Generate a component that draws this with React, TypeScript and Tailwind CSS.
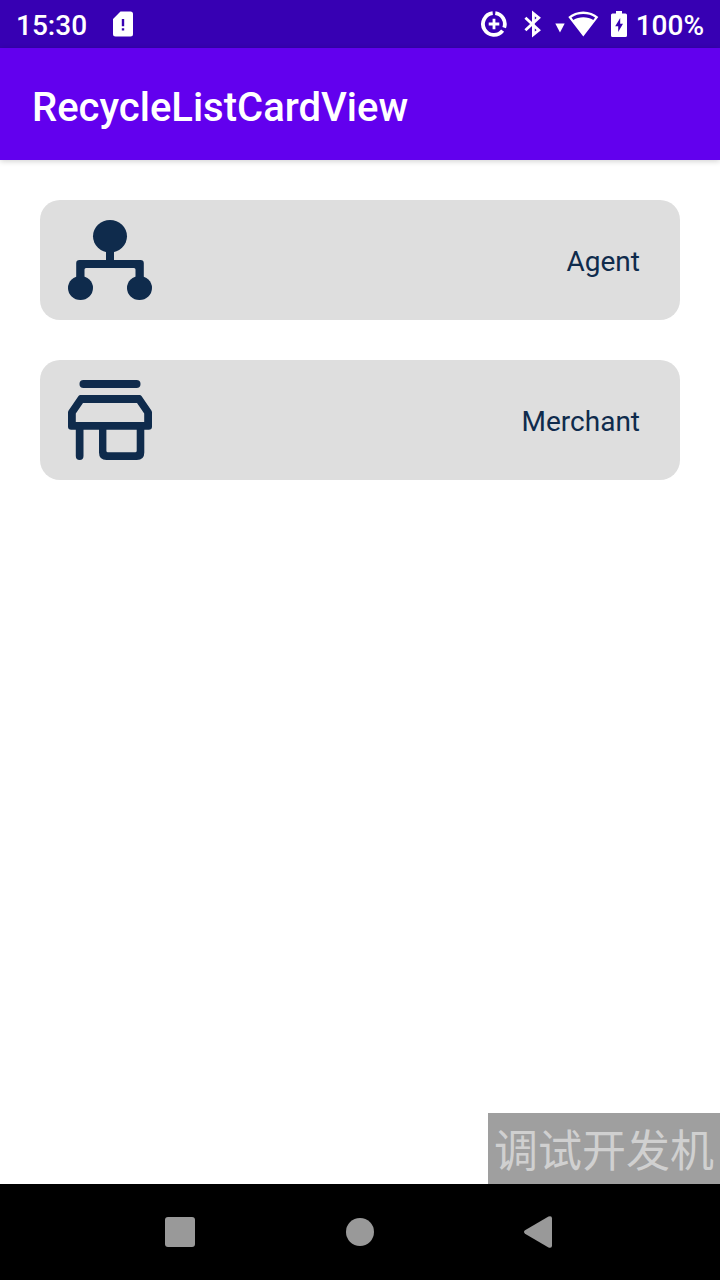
import type { ReactNode } from "react";

function StatusBar() {
  return (
    <header className="flex h-12 items-center justify-between bg-[#3700b3] px-4 text-[28px] leading-8 font-medium text-white">
      <div className="flex items-center gap-6">
        <time className="pt-1">15:30</time>
        <svg viewBox="0 0 24 26" className="h-[26px] w-6" aria-label="SD card issue">
          <path
            fillRule="evenodd"
            fill="currentColor"
            d="M9.5 0.5H19.5A2.5 2.5 0 0 1 22 3V23A2.500 2.500 0 0 1 19.500 25.500H4.500A2.500 2.500 0 0 1 2 23V8ZM10.800 8V15.200H13.200V8ZM10.800 17.200V19.600H13.200V17.200Z"
          />
        </svg>
      </div>
      <div className="flex items-center">
        <svg viewBox="0 0 26 26" className="mr-4 size-[26px]" aria-label="Data saver">
          <path
            fill="none"
            stroke="currentColor"
            strokeWidth="3.800"
            d="M11.700 2.200A10.900 10.900 0 1 0 21.600 19.600M23.200 16.600A10.900 10.900 0 0 0 14.300 2.200"
          />
          <path fill="none" stroke="currentColor" strokeWidth="2.800" d="M13 7.700V18.300M7.700 13H18.300" />
        </svg>
        <svg viewBox="0 0 20 28" className="mr-3 h-7 w-5" aria-label="Bluetooth">
          <path
            fill="none"
            stroke="currentColor"
            strokeWidth="2.800"
            d="M2.400 7.700L15.800 20.200L10.400 24.500V3.500L15.800 7.800L2.400 20.300"
          />
        </svg>
        <svg viewBox="0 0 44 26" className="mr-3 h-[26px] w-11" aria-label="Wi-Fi">
          <path fill="currentColor" d="M0.300 12.500H9.700L5 21.500Z" />
          <path
            fillRule="evenodd"
            fill="currentColor"
            d="M13.300 6C17.200 2.500 22.500 0.400 28.300 0.400S39.400 2.500 43.300 6L28.300 25.600ZM16.500 6.400L18.300 8.900C21.200 7.300 24.600 6.200 28.300 6.200S35.400 7.300 38.300 8.900L40.100 6.400C36.800 4.300 32.700 3.100 28.300 3.100S19.800 4.300 16.500 6.400Z"
          />
        </svg>
        <svg viewBox="0 0 16 28" className="mr-[9px] h-7 w-4" aria-label="Battery charging">
          <path
            fillRule="evenodd"
            fill="currentColor"
            d="M5 1H11V3.500H14.500A1.500 1.500 0 0 1 16 5V25.500A1.500 1.500 0 0 1 14.500 27H1.500A1.500 1.500 0 0 1 0 25.500V5A1.500 1.500 0 0 1 1.500 3.500H5ZM9.200 8L4.200 16.200H7.200V22L12 13.700H9.200Z"
          />
        </svg>
        <span className="pt-1">100%</span>
      </div>
    </header>
  );
}

function AgentIcon() {
  return (
    <svg viewBox="0 0 84 80" className="h-20 w-[84px]" fill="currentColor" aria-hidden="true">
      <ellipse cx="42" cy="16.200" rx="17" ry="16.200" />
      <ellipse cx="12.500" cy="68" rx="12.500" ry="12" />
      <ellipse cx="71.500" cy="68" rx="12.500" ry="12" />
      <path d="M38 30H46V40H72.500Q75.800 40 75.800 43.300V60H67.500V49.500Q67.500 48 66 48H18Q16.500 48 16.500 49.500V60H8.200V43.300Q8.200 40 11.500 40H38Z" />
    </svg>
  );
}

function MerchantIcon() {
  return (
    <svg viewBox="0 0 84 80" className="h-20 w-[84px]" fill="currentColor" aria-hidden="true">
      <rect x="11.500" y="0" width="61" height="8" rx="4" />
      <path
        fillRule="evenodd"
        d="M12.500 15H71.500Q72.800 15 73.500 16L83.400 30.500Q84 31.500 84 32.600V46.500Q84 49.700 80.800 49.700H3.200Q0 49.700 0 46.500V32.600Q0 31.500 0.600 30.500L10.500 16Q11.200 15 12.500 15ZM15 23L7.800 33.500V42H76.200V33.500L69 23Z"
      />
      <path d="M7.800 48H15.500V76A3.850 4 0 0 1 7.800 76Z" />
      <path d="M31 48H38.400V70.800Q38.400 72.300 39.900 72.300H67.200Q68.700 72.300 68.700 70.800V48H76.300V72.500Q76.300 80 68.800 80H38.500Q31 80 31 72.500Z" />
    </svg>
  );
}

function Card({ label, icon }: { label: string; icon: ReactNode }) {
  return (
    <li>
      <button
        type="button"
        className="flex w-full items-center justify-between rounded-[20px] bg-[#dedede] py-5 pr-10 pl-7 text-[#0f2b4c]"
      >
        {icon}
        <span className="pt-1 text-[28px] leading-8">{label}</span>
      </button>
    </li>
  );
}

function NavBar() {
  return (
    <nav className="grid h-24 grid-cols-3 bg-black px-[12.5%] text-[#999999]">
      <button type="button" aria-label="Recent apps" className="flex items-center justify-center">
        <span className="size-[30px] rounded-[3px] bg-current" />
      </button>
      <button type="button" aria-label="Home" className="flex items-center justify-center">
        <span className="size-7 rounded-full bg-current" />
      </button>
      <button type="button" aria-label="Back" className="flex items-center justify-center">
        <svg viewBox="0 0 32 32" className="size-8" fill="currentColor" aria-hidden="true">
          <path d="M1 14.300L24.500 0.500Q28 -0.700 28 2.500V29.500Q28 32.700 24.500 31.500L1 17.700Q-1 16 1 14.300Z" />
        </svg>
      </button>
    </nav>
  );
}

export default function App() {
  return (
    <div className="flex min-h-screen flex-col bg-white font-[Roboto,'Noto_Sans_CJK_SC',sans-serif]">
      <StatusBar />
      <div className="flex h-28 items-center bg-[#6200ee] px-8 pt-2 text-white shadow-[0_1px_6px_rgba(0,0,0,0.2)]">
        <h1 className="text-[40px] leading-12 font-medium">RecycleListCardView</h1>
      </div>
      <main className="flex flex-1 flex-col">
        <ul className="flex flex-col gap-10 p-10">
          <Card label="Agent" icon={<AgentIcon />} />
          <Card label="Merchant" icon={<MerchantIcon />} />
        </ul>
        <p className="mt-auto self-end bg-[#9f9f9f] px-1.5 pt-[7px] text-[44px] leading-16 text-[#d0d0d0]">
          调试开发机
        </p>
      </main>
      <NavBar />
    </div>
  );
}
